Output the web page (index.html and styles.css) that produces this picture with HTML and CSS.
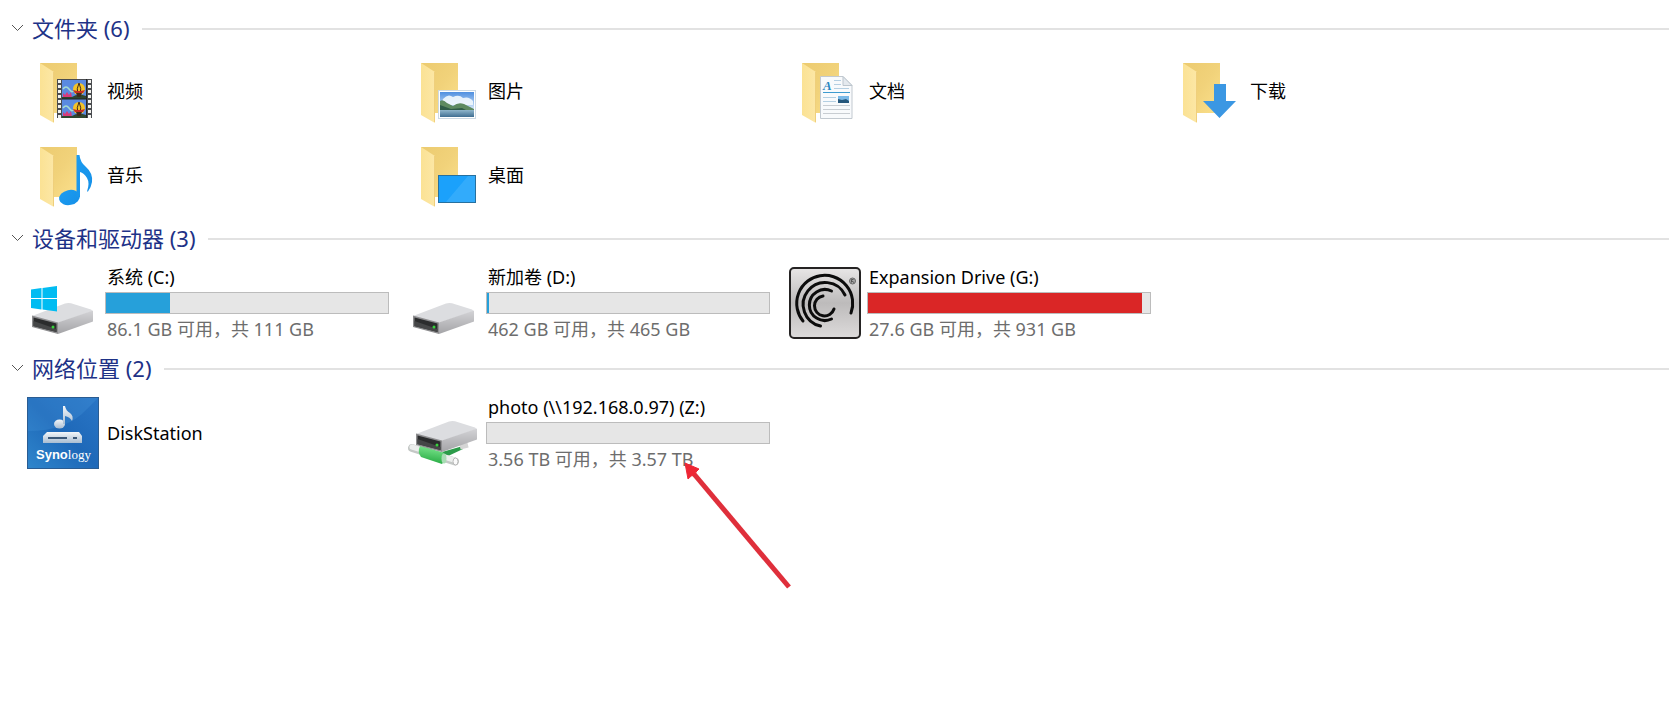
FILE: index.html
```html
<!DOCTYPE html>
<html lang="zh-CN">
<head>
  <meta charset="UTF-8" />
  <meta name="viewport" content="width=device-width, initial-scale=1" />
  <title>此电脑</title>
  <link rel="stylesheet" href="styles.css">
</head>
<body>
  <!-- Shared shapes -->
  <svg class="defs" width="0" height="0" aria-hidden="true">
    <defs>
      <linearGradient id="backFill" x1="0" y1="0" x2="1" y2="1">
        <stop offset="0" stop-color="#eccb70" />
        <stop offset="0.5" stop-color="#f1d27a" />
        <stop offset="1" stop-color="#fbe08c" />
      </linearGradient>
      <linearGradient id="flapFill" x1="0" y1="0" x2="1" y2="0">
        <stop offset="0" stop-color="#fbe294" />
        <stop offset="1" stop-color="#fce7a6" />
      </linearGradient>
      <linearGradient id="blueFill" x1="0" y1="0" x2="1" y2="1">
        <stop offset="0" stop-color="#1d9cf0" />
        <stop offset="1" stop-color="#1590e8" />
      </linearGradient>
      <linearGradient id="skyFill" x1="0" y1="0" x2="0" y2="1">
        <stop offset="0" stop-color="#4f8fe0" />
        <stop offset="1" stop-color="#e4f1fb" />
      </linearGradient>
      <linearGradient id="seaFill" x1="0" y1="0" x2="0" y2="1">
        <stop offset="0" stop-color="#8fb6cc" />
        <stop offset="1" stop-color="#3f6e92" />
      </linearGradient>
      <linearGradient id="sideFill" x1="0" y1="0" x2="0" y2="1">
        <stop offset="0" stop-color="#d3d3d6" />
        <stop offset="1" stop-color="#a4a4a7" />
      </linearGradient>
      <linearGradient id="steelFill" x1="0" y1="0" x2="0" y2="1">
        <stop offset="0" stop-color="#e8e6e6" />
        <stop offset="0.5" stop-color="#bdbbbb" />
        <stop offset="1" stop-color="#dddbdb" />
      </linearGradient>
      <linearGradient id="nasFill" x1="0" y1="1" x2="1" y2="0">
        <stop offset="0" stop-color="#2f86cc" />
        <stop offset="0.5" stop-color="#1e68b8" />
        <stop offset="1" stop-color="#2a76c6" />
      </linearGradient>
      <linearGradient id="silverFill" x1="0" y1="0" x2="0" y2="1">
        <stop offset="0" stop-color="#f3f6f9" />
        <stop offset="1" stop-color="#a9bdd2" />
      </linearGradient>
      <linearGradient id="tubeFill" x1="0.4" y1="0" x2="0.2" y2="1">
        <stop offset="0" stop-color="#7be58d" />
        <stop offset="1" stop-color="#1fa63c" />
      </linearGradient>

      <symbol id="folder" viewBox="0 0 72 72">
        <path d="M13 8H50V58H27L13 56Z" fill="url(#backFill)" />
        <path d="M13 8L27 17V68L13 60Z" fill="url(#flapFill)" />
        <path d="M26.5 17V67" stroke="#efcf7c" stroke-width="1" />
      </symbol>

      <symbol id="drive" viewBox="0 0 72 72">
        <path d="M5 49L38 36.500Q41 35.500 44 36.300L64 42.500Q66 43.300 64.500 44.500L31 56Z" fill="#dcdde0" />
        <path d="M31 55.500L66 43.500V54.500L31 67Z" fill="url(#sideFill)" />
        <path d="M5 48.500L31 55.500V67L5 60Z" fill="#8d8d8f" />
        <path d="M6.500 50.500L29.500 56.500V65L6.500 59Z" fill="#2b2c2d" />
        <path d="M6.500 54L29.500 62V65L6.500 59Z" fill="#454647" />
        <circle cx="26" cy="60" r="1.500" fill="#38d23c" />
      </symbol>

      <!-- one film frame, 24x19 -->
      <symbol id="film" viewBox="0 0 24 19">
        <rect width="24" height="19" fill="#5a8ae0" />
        <path d="M1 9Q4 5 7 9T11 11" fill="none" stroke="#a5dcd0" stroke-width="1.500" />
        <path d="M1 17V13L3 15L5 12L7 15L9 12L10 18Z" fill="#d93a7a" />
        <path d="M0 17H10Q16 13 24 16V19H0Z" fill="#2f4630" />
        <ellipse cx="17" cy="9" rx="6" ry="6" fill="#f4c328" />
        <path d="M17 3Q14 9 16 14M17 3Q20 9 18 14" fill="none" stroke="#3c2a1c" />
        <path d="M11 10Q17 12 23 10L21 13H13Z" fill="#c62c23" />
        <path d="M14 13H20L18.500 17H15.500Z" fill="#3c2a1c" />
      </symbol>
    </defs>
  </svg>

  <main class="explorer">
    <section class="group">
      <h2>
        <button class="toggle" aria-expanded="true">
          <svg class="chevron" viewBox="0 0 13 8"><path d="M1 1L6.500 6.500L12 1" /></svg>
          文件夹 (6)
        </button>
      </h2>
      <div class="items">
        <a class="item" href="#videos">
          <svg class="icon" viewBox="0 0 72 72">
            <use href="#folder" />
            <rect x="30" y="24" width="35" height="39" fill="#4a4c50" />
            <path d="M32.500 25V63M62.500 25V63" stroke="#f1f1ee" stroke-width="3" stroke-dasharray="3 2" />
            <use href="#film" x="35" y="25" width="24" height="19" />
            <use href="#film" x="35" y="44" width="24" height="19" />
            <path d="M35 44H60" stroke="#222" />
            <path d="M59.500 24V63" stroke="#222" />
          </svg>
          <span class="name">视频</span>
        </a>
        <a class="item" href="#pictures">
          <svg class="icon" viewBox="0 0 72 72">
            <use href="#folder" />
            <rect x="30.500" y="35.500" width="37" height="28" fill="#fff" stroke="#ccd9e4" />
            <rect x="32" y="37" width="34" height="19" fill="url(#skyFill)" />
            <path d="M35 44Q40 38 45 42Q51 39 55 43Q61 41 65 46V50H33Z" fill="#f2f8fd" opacity="0.900" />
            <path d="M32 46Q35 44 39 48L45 51Q50 47 56 49L66 54V56H32Z" fill="#5d8a60" />
            <path d="M32 50L43 54L54 53L60 56H32Z" fill="#2f5c48" />
            <rect x="32" y="55" width="34" height="7" fill="url(#seaFill)" />
          </svg>
          <span class="name">图片</span>
        </a>
        <a class="item" href="#documents">
          <svg class="icon" viewBox="0 0 72 72">
            <use href="#folder" />
            <path d="M31.500 21.500H54L63 30.500V63.500H31.500Z" fill="#f8fafc" stroke="#c2c9d0" />
            <path d="M54 21.500V30.500H63Z" fill="#e4e9ee" stroke="#bcc5cd" />
            <text class="doc-letter" x="34" y="35">A</text>
            <path d="M45 25.500H52M45 29.500H52M45 33.500H60M34 42.500H47M34 46.500H47" stroke="#b4cfe2" />
            <path d="M34 37.500H61" stroke="#3d9bd0" />
            <path d="M34 50.500H61M34 54.500H61M34 58.500H61" stroke="#c8cdd2" />
            <rect x="49" y="41" width="11" height="7" fill="#79b9e8" />
            <path d="M49 44L53 45L57 44L60 46V48H49Z" fill="#25577c" />
          </svg>
          <span class="name">文档</span>
        </a>
        <a class="item" href="#downloads">
          <svg class="icon" viewBox="0 0 72 72">
            <use href="#folder" />
            <path d="M44 29H56V46H66L49.500 63L33 46H44Z" fill="#3b97e3" />
          </svg>
          <span class="name">下载</span>
        </a>
        <a class="item" href="#music">
          <svg class="icon" viewBox="0 0 72 72">
            <use href="#folder" />
            <path d="M28 60L34 57H52V62H28Z" fill="#fff" />
            <ellipse cx="42.500" cy="58.500" rx="10.500" ry="7.500" transform="rotate(-12 42.500 58.500)" fill="url(#blueFill)" />
            <path d="M49.500 16H52.500Q53 23 59 28Q66 34 65 43Q64 49 61 52.500H60Q63 44 60 39Q57 34 53 33V58H49.500Z" fill="url(#blueFill)" />
          </svg>
          <span class="name">音乐</span>
        </a>
        <a class="item" href="#desktop">
          <svg class="icon" viewBox="0 0 72 72">
            <use href="#folder" />
            <rect x="30.500" y="36.500" width="37" height="27" fill="#1ba1fb" stroke="#26709f" />
            <path d="M38 63L60 37H67V63Z" fill="#43b2fc" opacity="0.600" />
          </svg>
          <span class="name">桌面</span>
        </a>
      </div>
    </section>

    <section class="group">
      <h2>
        <button class="toggle" aria-expanded="true">
          <svg class="chevron" viewBox="0 0 13 8"><path d="M1 1L6.500 6.500L12 1" /></svg>
          设备和驱动器 (3)
        </button>
      </h2>
      <div class="items drives">
        <a class="item" href="#c">
          <svg class="icon" viewBox="0 0 72 72">
            <use href="#drive" />
            <path d="M4 22.500L14.500 21V31H4ZM15.500 21L30 19V31H15.500ZM4 32H14.500V42.500L4 41ZM15.500 32H30V44.500L15.500 42.500Z" fill="#00bcf2" />
          </svg>
          <span class="info">
            <span class="name">系统 (C:)</span>
            <span class="bar"><span class="fill" style="width: 22.8%"></span></span>
            <span class="space">86.1 GB 可用，共 111 GB</span>
          </span>
        </a>
        <a class="item" href="#d">
          <svg class="icon" viewBox="0 0 72 72"><use href="#drive" /></svg>
          <span class="info">
            <span class="name">新加卷 (D:)</span>
            <span class="bar"><span class="fill" style="width: 0.8%"></span></span>
            <span class="space">462 GB 可用，共 465 GB</span>
          </span>
        </a>
        <a class="item" href="#g">
          <svg class="icon" viewBox="0 0 72 72">
            <rect x="1" y="1" width="70" height="70" rx="4" fill="url(#steelFill)" stroke="#252323" stroke-width="2" />
            <g fill="none" stroke="#0c0c0c" stroke-width="3" stroke-linecap="round">
              <path d="M14 54A28 28 0 1 1 62 46" />
              <path d="M31.500 59A22 22 0 1 1 56 28" />
              <path d="M42.500 52A15.500 15.500 0 1 1 42.500 24" />
              <path d="M45 42A10 10 0 1 1 34 29" />
            </g>
            <circle cx="63.500" cy="14" r="3" fill="#aaa" stroke="#666" />
            <path d="M62.500 15.500V12.500H64.500M63 14L65 15.500" stroke="#555" fill="none" />
          </svg>
          <span class="info">
            <span class="name">Expansion Drive (G:)</span>
            <span class="bar"><span class="fill full" style="width: 97%"></span></span>
            <span class="space">27.6 GB 可用，共 931 GB</span>
          </span>
        </a>
      </div>
    </section>

    <section class="group">
      <h2>
        <button class="toggle" aria-expanded="true">
          <svg class="chevron" viewBox="0 0 13 8"><path d="M1 1L6.500 6.500L12 1" /></svg>
          网络位置 (2)
        </button>
      </h2>
      <div class="items drives">
        <a class="item" href="#diskstation">
          <svg class="icon" viewBox="0 0 72 72">
            <rect x="0.500" y="0.500" width="71" height="71" fill="url(#nasFill)" stroke="#2a5c92" />
            <path d="M1 1H71L60 12Q40 34 1 34Z" fill="#4b9ade" opacity="0.250" />
            <ellipse cx="32.500" cy="27" rx="5.500" ry="4.500" fill="url(#silverFill)" />
            <path d="M36 9H38Q39 14 43 16Q47 19 45 24Q43 20 38 19V27H36Z" fill="url(#silverFill)" />
            <path d="M20 35H52L55 39V46H16V39Z" fill="url(#silverFill)" />
            <path d="M21 41H40M46 41H50" stroke="#3b5878" stroke-width="2" />
            <text class="brand" x="9" y="62">Syno<tspan class="brand-serif">logy</tspan></text>
          </svg>
          <span class="name">DiskStation</span>
        </a>
        <a class="item" href="#z">
          <svg class="icon" viewBox="0 0 72 72">
            <path d="M34 55L55 49V52L38 60Z" fill="#2b9b49" />
            <path d="M52 50L60 48" stroke="#d5d5d5" stroke-width="5" />
            <path d="M4 51L47 64.500" stroke="#c4c8c6" stroke-width="8" stroke-linecap="round" />
            <path d="M4 50L46 63" stroke="#eceeed" stroke-width="5" stroke-linecap="round" />
            <path d="M12 49Q15 49 36 56Q39 62 34 67L13 60Q9 55 12 49Z" fill="url(#tubeFill)" />
            <ellipse cx="36" cy="61.500" rx="2.500" ry="5" fill="#a8dcb4" />
            <ellipse cx="47.500" cy="64.500" rx="2.500" ry="3.500" fill="#fafafa" stroke="#b9b9b9" />
            <use href="#drive" x="3" y="-12" width="72" height="72" />
          </svg>
          <span class="info">
            <span class="name">photo (\\192.168.0.97) (Z:)</span>
            <span class="bar"></span>
            <span class="space">3.56 TB 可用，共 3.57 TB</span>
          </span>
          <svg class="pointer" viewBox="0 0 108 130" aria-hidden="true">
            <path d="M10 12L105 125" stroke="#df2f3b" stroke-width="5" />
            <path d="M1 1L15 7Q11 10 11 13Q7 13 4 17Z" fill="#ee2634" stroke="#ee2634" stroke-linejoin="round" />
          </svg>
        </a>
      </div>
    </section>
  </main>

  <script>
    document.querySelectorAll(".toggle").forEach((btn) => {
      btn.addEventListener("click", () => {
        const items = btn.closest(".group").querySelector(".items");
        items.hidden = !items.hidden;
        btn.setAttribute("aria-expanded", String(!items.hidden));
      });
    });
  </script>
</body>
</html>
```

FILE: styles.css
```css
body {
  margin: 0;
  background-color: #fff;
  color: #000;
  font-family: "Noto Sans", "Noto Sans CJK SC", sans-serif;
  font-size: 18px;
  line-height: 24px;
}

.defs {
  position: absolute;
}

.explorer {
  box-sizing: border-box;
  min-height: 100vh;
  padding: 9px 11px;
}

.group {
  margin-bottom: 2px;
}

h2 {
  display: flex;
  align-items: center;
  height: 40px;
  margin: 0;
  font-size: 22px;
  font-weight: normal;
}

h2::after {
  content: "";
  flex: 1;
  height: 2px;
  margin-left: 12px;
  background-color: #e2e2e2;
}

.toggle {
  display: flex;
  align-items: center;
  gap: 8px;
  padding: 0 0 2px;
  border: none;
  background: none;
  color: #1e3287;
  font: inherit;
  line-height: 24px;
  cursor: pointer;
}

.chevron {
  width: 13px;
  height: 8px;
  fill: none;
  stroke: #555;
}

.items {
  display: grid;
  grid-template-columns: repeat(auto-fill, 381px);
  grid-auto-rows: 84px;
  padding-left: 16px;
}

.items[hidden] {
  display: none;
}

.drives {
  grid-auto-rows: 88px;
}

.item {
  position: relative;
  display: flex;
  align-items: center;
  gap: 6px;
  color: inherit;
  text-decoration: none;
}

.icon {
  flex: none;
  width: 72px;
  height: 72px;
}

.name,
.space {
  padding-left: 2px;
  white-space: nowrap;
}

.info {
  display: flex;
  flex-direction: column;
  gap: 3px;
  width: 284px;
}

.space {
  color: #6d6d6d;
}

.bar {
  display: block;
  box-sizing: border-box;
  height: 22px;
  border: 1px solid #bcbcbc;
  background-color: #e6e6e6;
}

.fill {
  display: block;
  height: 100%;
  background-color: #26a0da;
}

.full {
  background-color: #da2626;
}

.doc-letter {
  fill: #2a86c0;
  font: italic bold 13px "Liberation Serif", serif;
}

.brand {
  fill: #fff;
  font: bold 13px "Liberation Sans", sans-serif;
}

.brand-serif {
  font: 13px "Liberation Serif", serif;
}

/* arrow over the network drive */
.pointer {
  position: absolute;
  left: 276px;
  top: 73px;
  width: 108px;
  height: 130px;
  pointer-events: none;
}
```
